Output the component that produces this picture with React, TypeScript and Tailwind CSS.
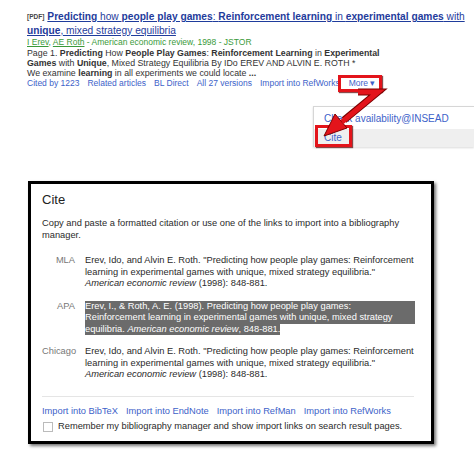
import React from 'react';

const B = ({ children }: { children: React.ReactNode }) => <b className="font-bold">{children}</b>;

function Result() {
  return (
    <div className="pl-[27px] pt-[10px] w-[474px] text-[#222]">
      <div className="text-[10.2px] leading-[13.5px] text-[#1f3c9c] w-[446px]">
        <span className="text-[6.5px] font-bold text-[#444] mr-[3px] align-[1px]">[PDF]</span>
        <a className="underline">
          <B>Predicting</B> how <B>people play games</B>: <B>Reinforcement learning</B> in <B>experimental games</B> with{' '}
          <B>unique</B>, mixed strategy equilibria
        </a>
      </div>
      <div className="text-[8.5px] leading-[11px] text-[#3a9a3a]">
        <span className="underline">I Erev</span>, <span className="underline">AE Roth</span> - American economic review, 1998 - JSTOR
      </div>
      <div className="text-[8.8px] leading-[10px] text-[#333] w-[420px]">
        Page 1. <B>Predicting</B> How <B>People Play Games</B>: <B>Reinforcement Learning</B> in <B>Experimental</B>
        <br />
        <B>Games</B> with <B>Unique</B>, Mixed Strategy Equilibria By IDo EREV AND ALVIN E. ROTH *
        <br />
        We examine <B>learning</B> in all experiments we could locate <B>...</B>
      </div>
      <div className="flex gap-[8px] text-[8.5px] leading-[11px] text-[#3d62c9]">
        <span>Cited by 1223</span>
        <span>Related articles</span>
        <span>BL Direct</span>
        <span>All 27 versions</span>
        <span>Import into RefWorks</span>
        <span className="ml-[1px]">More ▾</span>
      </div>
    </div>
  );
}

function Menu() {
  return (
    <div className="ml-[313px] mt-[17px] w-[161px] border-l border-t border-[#d6d6d6] bg-white text-[10px] text-[#3d62c9] shadow-[0_1px_2px_rgba(0,0,0,0.15)]">
      <div className="h-[22px] pl-[10px] pt-[6px] leading-[12px]">Check availability@INSEAD</div>
      <div className="h-[18px] pl-[10px] bg-[#efefef] leading-[18px]">Cite</div>
    </div>
  );
}

function Row({ label, children }: { label: string; children: React.ReactNode }) {
  return (
    <div className="flex">
      <div className="w-[33px] shrink-0 text-right text-[#777]">{label}</div>
      <div className="ml-[10px] w-[330px]">{children}</div>
    </div>
  );
}

function CiteDialog() {
  return (
    <div className="ml-[28px] mt-[34px] w-[406px] h-[263px] border-[3px] border-black bg-white shadow-[2px_2px_3px_rgba(0,0,0,0.55)] px-[11px] text-[9.3px] leading-[11.5px] text-[#2a2a2a]">
      <div className="text-[13px] leading-[16px] pt-[8px] text-[#222]">Cite</div>
      <div className="mt-[10px] w-[372px]">
        Copy and paste a formatted citation or use one of the links to import into a bibliography manager.
      </div>
      <div className="mt-[14px] flex flex-col gap-[11px]">
        <Row label="MLA">
          Erev, Ido, and Alvin E. Roth. "Predicting how people play games: Reinforcement
          <br />
          learning in experimental games with unique, mixed strategy equilibria."
          <br />
          <i>American economic review</i> (1998): 848-881.
        </Row>
        <Row label="APA">
          <div className="bg-[#6b6b6b] text-white">Erev, I., &amp; Roth, A. E. (1998). Predicting how people play games:</div>
          <div className="bg-[#6b6b6b] text-white">Reinforcement learning in experimental games with unique, mixed strategy</div>
          <span className="bg-[#6b6b6b] text-white inline-block">
            equilibria. <i>American economic review</i>, 848-881.
          </span>
        </Row>
        <Row label="Chicago">
          Erev, Ido, and Alvin E. Roth. "Predicting how people play games: Reinforcement
          <br />
          learning in experimental games with unique, mixed strategy equilibria."
          <br />
          <i>American economic review</i> (1998): 848-881.
        </Row>
      </div>
      <div className="mt-[15px] h-px w-[372px] bg-[#e5e5e5]" />
      <div className="mt-[9px] flex gap-[8px] text-[#3d62c9]">
        <span>Import into BibTeX</span>
        <span>Import into EndNote</span>
        <span>Import into RefMan</span>
        <span>Import into RefWorks</span>
      </div>
      <div className="mt-[4px] flex items-center gap-[5px]">
        <span className="ml-[1px] w-[10px] h-[10px] border border-[#bbb] bg-white" />
        <span>Remember my bibliography manager and show import links on search result pages.</span>
      </div>
    </div>
  );
}

export default function App() {
  return (
    <div className="relative w-[474px] h-[454px] overflow-hidden bg-white font-['Liberation_Sans',Arial,sans-serif]">
      <Result />
      <Menu />
      <CiteDialog />
      {/* callout boxes + arrow */}
      <div className="absolute left-[338px] top-[75px] w-[44px] h-[17px] border-[3px] border-[#e3141b] shadow-[1px_1px_1px_rgba(90,0,0,0.7)]" />
      <div className="absolute left-[315px] top-[125px] w-[37px] h-[22px] border-[3px] border-[#e3141b] shadow-[1px_1px_1px_rgba(90,0,0,0.7)]" />
      <svg className="absolute left-0 top-0" width="474" height="454" viewBox="0 0 474 454">
        <path d="M358 92 L378 92 L344 120" stroke="#7a0000" strokeWidth="7" fill="none" strokeLinejoin="miter" />
        <polygon points="324,136 335,114 347,128" fill="#e3141b" stroke="#7a0000" strokeWidth="1" />
        <path d="M358 92 L378 92 L342 122" stroke="#e3141b" strokeWidth="5" fill="none" strokeLinejoin="miter" />
      </svg>
    </div>
  );
}
